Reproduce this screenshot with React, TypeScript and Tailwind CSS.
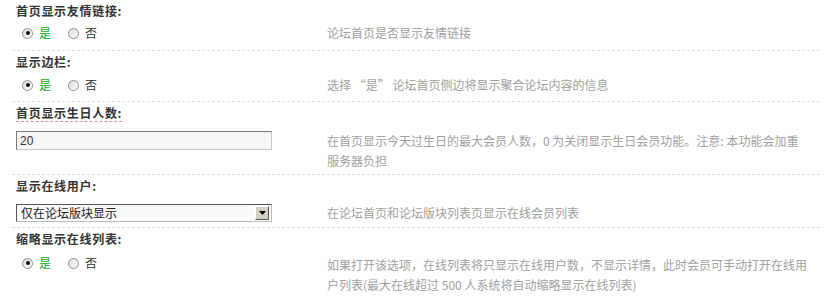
import React from "react";

const font = { fontFamily: '"Noto Sans CJK SC", "Noto Sans", sans-serif' };

function Radio({ checked }: { checked?: boolean }) {
  return (
    <span className="relative inline-flex h-[11px] w-[11px] items-center justify-center rounded-full border border-[#8e8f8f] bg-gradient-to-br from-[#dcdcd7] to-white">
      {checked && <span className="h-[4px] w-[4px] rounded-full bg-[#111]" />}
    </span>
  );
}

function YesNo() {
  return (
    <div className="flex h-[20px] items-center pl-[10px] text-[12px] leading-[20px]">
      <Radio checked />
      <span className="ml-[6px] text-[#12a812]">是</span>
      <span className="ml-[17px] flex items-center">
        <Radio />
      </span>
      <span className="ml-[6px] text-[#333]">否</span>
    </div>
  );
}

function Title({ text, tip }: { text: string; tip?: boolean }) {
  if (tip) {
    return (
      <div className="h-[24px] pl-[4px] pt-[3px] text-[12px] leading-[16px]">
        <span className="block w-fit border-b border-dashed border-b-[#e48aa8] font-bold tracking-[0.7px] text-[#333]">
          {text}
        </span>
      </div>
    );
  }
  return (
    <div className="h-[21px] pl-[4px] pt-[1px] text-[12px] font-bold leading-[20px] tracking-[0.7px] text-[#333]">
      {text}
    </div>
  );
}

function Row({
  control,
  desc,
  pt,
  pb,
}: {
  control: React.ReactNode;
  desc: React.ReactNode;
  pt: string;
  pb: string;
}) {
  return (
    <div className={`flex border-b border-dashed border-[#dedede] text-[12px] leading-[20px] ${pt} ${pb}`}>
      <div className="w-[311px] shrink-0">{control}</div>
      <div className="pl-[4px] text-[#a0a0a0]">{desc}</div>
    </div>
  );
}

export default function App() {
  return (
    <div className="h-[300px] w-[830px] overflow-hidden bg-white" style={font}>
      <div className="ml-[12px] w-[808px]">
        <Title text="首页显示友情链接:" />
        <Row pt="pt-[2px]" pb="pb-[7px]" control={<YesNo />} desc="论坛首页是否显示友情链接" />

        <Title text="显示边栏:" />
        <Row
          pt="pt-[3px]"
          pb="pb-[6px]"
          control={<YesNo />}
          desc="选择 “是” 论坛首页侧边将显示聚合论坛内容的信息"
        />

        <Title text="首页显示生日人数:" tip />
        <Row
          pt="pt-[5px]"
          pb="pb-[3px]"
          control={
            <div className="pl-[4px]">
              <input
                defaultValue="20"
                className="block h-[19px] w-[256px] border border-t-[#777] border-l-[#777] border-r-[#c8c8c8] border-b-[#c8c8c8] bg-[#f7f7f7] px-[3px] text-[12px] leading-[17px] text-[#333] outline-none"
                style={{ fontFamily: '"Liberation Sans", "Noto Sans CJK SC", sans-serif' }}
              />
            </div>
          }
          desc={
            <>
              在首页显示今天过生日的最大会员人数，0 为关闭显示生日会员功能。注意: 本功能会加重
              <br />
              服务器负担
            </>
          }
        />

        <Title text="显示在线用户:" />
        <Row
          pt="pt-[7px]"
          pb="pb-[4px]"
          control={
            <div className="pl-[4px] pt-[1px]">
              <div className="flex h-[18px] w-[256px] items-center border border-t-[#555] border-l-[#555] border-r-[#bbb] border-b-[#bbb] bg-[#fafafa]">
                <span className="flex-1 pl-[4px] text-[12px] leading-[16px] text-[#222]">仅在论坛版块显示</span>
                <span className="mr-[2px] flex h-[14px] w-[14px] items-center justify-center border border-t-white border-l-white border-r-[#555] border-b-[#555] bg-[#d4d0c8]">
                  <svg width="7" height="4" viewBox="0 0 7 4">
                    <path d="M0 0h7L3.5 4z" fill="#000" />
                  </svg>
                </span>
              </div>
            </div>
          }
          desc="在论坛首页和论坛版块列表页显示在线会员列表"
        />

        <Title text="缩略显示在线列表:" />
        <div className="flex pt-[4px] text-[12px] leading-[20px]">
          <div className="w-[311px] shrink-0">
            <YesNo />
          </div>
          <div className="pl-[4px] pt-[2px] text-[#a0a0a0]">
            如果打开该选项，在线列表将只显示在线用户数，不显示详情，此时会员可手动打开在线用
            <br />
            户列表(最大在线超过 500 人系统将自动缩略显示在线列表)
          </div>
        </div>
      </div>
    </div>
  );
}
